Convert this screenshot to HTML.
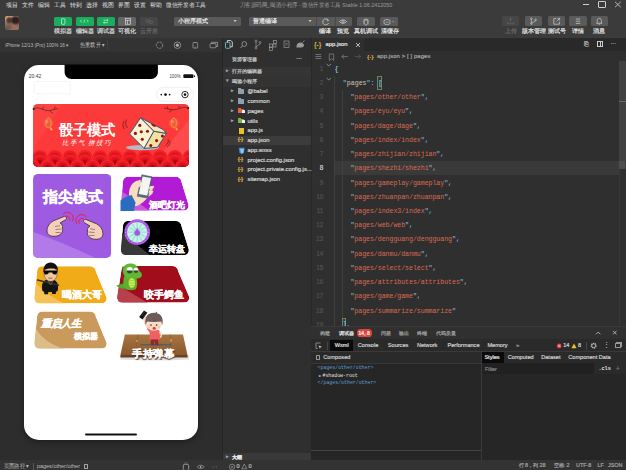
<!DOCTYPE html>
<html><head><meta charset="utf-8">
<style>
*{box-sizing:border-box;margin:0;padding:0}
html,body{width:626px;height:470px;overflow:hidden;background:#2e2e2e;font-family:"Liberation Sans",sans-serif;color:#ccc}
.a{position:absolute}
.t{position:absolute;white-space:nowrap;line-height:1;-webkit-text-stroke:0.18px currentColor}
.m{font-family:"Liberation Mono",monospace;-webkit-text-stroke:0}
</style></head><body>
<div class="a" style="left:0px;top:0px;width:626px;height:38px;background:#3b3b3b"></div>
<svg class="a" style="left:0;top:0;overflow:visible" width="1" height="1"><text x="5.9" y="6.9" font-size="5.9" fill="#e2e2e2" textLength="11.700000000000001" lengthAdjust="spacingAndGlyphs" font-family="Liberation Sans" >项目</text></svg>
<svg class="a" style="left:0;top:0;overflow:visible" width="1" height="1"><text x="21.9" y="6.9" font-size="5.9" fill="#e2e2e2" textLength="11.699999999999996" lengthAdjust="spacingAndGlyphs" font-family="Liberation Sans" >文件</text></svg>
<svg class="a" style="left:0;top:0;overflow:visible" width="1" height="1"><text x="37.9" y="6.9" font-size="5.9" fill="#e2e2e2" textLength="11.699999999999996" lengthAdjust="spacingAndGlyphs" font-family="Liberation Sans" >编辑</text></svg>
<svg class="a" style="left:0;top:0;overflow:visible" width="1" height="1"><text x="53.9" y="6.9" font-size="5.9" fill="#e2e2e2" textLength="11.699999999999996" lengthAdjust="spacingAndGlyphs" font-family="Liberation Sans" >工具</text></svg>
<svg class="a" style="left:0;top:0;overflow:visible" width="1" height="1"><text x="69.9" y="6.9" font-size="5.9" fill="#e2e2e2" textLength="11.700000000000003" lengthAdjust="spacingAndGlyphs" font-family="Liberation Sans" >转到</text></svg>
<svg class="a" style="left:0;top:0;overflow:visible" width="1" height="1"><text x="85.9" y="6.9" font-size="5.9" fill="#e2e2e2" textLength="11.700000000000003" lengthAdjust="spacingAndGlyphs" font-family="Liberation Sans" >选择</text></svg>
<svg class="a" style="left:0;top:0;overflow:visible" width="1" height="1"><text x="101.9" y="6.9" font-size="5.9" fill="#e2e2e2" textLength="11.700000000000003" lengthAdjust="spacingAndGlyphs" font-family="Liberation Sans" >视图</text></svg>
<svg class="a" style="left:0;top:0;overflow:visible" width="1" height="1"><text x="117.9" y="6.9" font-size="5.9" fill="#e2e2e2" textLength="11.699999999999989" lengthAdjust="spacingAndGlyphs" font-family="Liberation Sans" >界面</text></svg>
<svg class="a" style="left:0;top:0;overflow:visible" width="1" height="1"><text x="133.9" y="6.9" font-size="5.9" fill="#e2e2e2" textLength="11.699999999999989" lengthAdjust="spacingAndGlyphs" font-family="Liberation Sans" >设置</text></svg>
<svg class="a" style="left:0;top:0;overflow:visible" width="1" height="1"><text x="149.9" y="6.9" font-size="5.9" fill="#e2e2e2" textLength="11.699999999999989" lengthAdjust="spacingAndGlyphs" font-family="Liberation Sans" >帮助</text></svg>
<svg class="a" style="left:0;top:0;overflow:visible" width="1" height="1"><text x="165.9" y="6.9" font-size="5.9" fill="#e2e2e2" textLength="40.099999999999994" lengthAdjust="spacingAndGlyphs" font-family="Liberation Sans" >微信开发者工具</text></svg>
<svg class="a" style="left:0;top:0;overflow:visible" width="1" height="1"><text x="239.5" y="6.9" font-size="5.9" fill="#9c9c9c" textLength="152.7" lengthAdjust="spacingAndGlyphs" font-family="Liberation Sans" >刀客源码网_喝酒小程序 - 微信开发者工具 Stable 1.06.2412050</text></svg>
<div class="a" style="left:5.4px;top:15.7px;width:13.8px;height:14.3px;border-radius:2px;background:radial-gradient(ellipse at 75% 30%,#2e201c 0 18%,transparent 38%),radial-gradient(ellipse at 30% 30%,#4a3a30 0 12%,transparent 30%),radial-gradient(ellipse at 70% 75%,#9a6a5a 0 15%,transparent 40%),radial-gradient(ellipse at 15% 15%,#e0a070 0 10%,transparent 25%),linear-gradient(160deg,#c8b49a 0%,#8a7462 40%,#6a5648 70%,#a08a76 100%)"></div>
<div class="a" style="left:54px;top:16.5px;width:18px;height:9.3px;background:#1aad5e;border-radius:1.5px"></div>
<div class="a" style="left:75.7px;top:16.5px;width:18px;height:9.3px;background:#1aad5e;border-radius:1.5px"></div>
<div class="a" style="left:97.2px;top:16.5px;width:18px;height:9.3px;background:#1aad5e;border-radius:1.5px"></div>
<div class="a" style="left:118.3px;top:16.5px;width:18px;height:9.3px;background:#666;border-radius:1.5px"></div>
<div class="a" style="left:140.3px;top:16.5px;width:18px;height:9.3px;background:#464646;border-radius:1.5px"></div>
<svg class="a" style="left:54px;top:16px" width="106" height="10" viewBox="54 16 106 10"><rect x="61.5" y="18.8" width="3.4" height="5.5" rx="0.6" fill="none" stroke="#fff" stroke-width="0.6"/><path d="M81.6 19.8l-1.2 1.3 1.2 1.3M87 19.8l1.2 1.3-1.2 1.3M84.9 19.5l-1.1 3.2" fill="none" stroke="#fff" stroke-width="0.55"/><path d="M103.5 20.2h4.5M107 19.3l1 0.9-1 0.9M108 22.6h-4.5M104.5 21.7l-1 0.9 1 0.9" fill="none" stroke="#fff" stroke-width="0.55"/><rect x="125.3" y="18.6" width="5.2" height="5.6" fill="none" stroke="#e6e6e6" stroke-width="0.6"/><path d="M125.3 20.4h5.2M127.5 20.4v3.8" stroke="#e6e6e6" stroke-width="0.6"/><ellipse cx="148" cy="21" rx="2" ry="1.3" fill="none" stroke="#6c6c6c" stroke-width="0.6"/><ellipse cx="150.8" cy="22.2" rx="2" ry="1.3" fill="none" stroke="#6c6c6c" stroke-width="0.6"/></svg>
<div class="t" style="left:23px;top:28.6px;width:80px;text-align:center;font-size:5.9px;color:#dcdcdc;">模拟器</div>
<div class="t" style="left:44.7px;top:28.6px;width:80px;text-align:center;font-size:5.9px;color:#dcdcdc;">编辑器</div>
<div class="t" style="left:66.1px;top:28.6px;width:80px;text-align:center;font-size:5.9px;color:#dcdcdc;">调试器</div>
<div class="t" style="left:87.2px;top:28.6px;width:80px;text-align:center;font-size:5.9px;color:#dcdcdc;">可视化</div>
<div class="t" style="left:109.19999999999999px;top:28.6px;width:80px;text-align:center;font-size:5.9px;color:#6e6e6e;">云开发</div>
<div class="a" style="left:173.6px;top:16.6px;width:67.5px;height:9.6px;background:#5a5a5a;border-radius:1.5px"></div>
<div class="t" style="left:178px;top:18.6px;font-size:5.6px;color:#e8e8e8;">小程序模式</div>
<div class="t" style="left:233.5px;top:19.0px;font-size:4.2px;color:#ddd;">▾</div>
<div class="a" style="left:248.8px;top:16.6px;width:103px;height:9.6px;background:#5a5a5a;border-radius:1.5px"></div>
<div class="a" style="left:316.3px;top:16.6px;width:0.6px;height:9.6px;background:#4a4a4a"></div>
<div class="a" style="left:334.5px;top:16.6px;width:0.6px;height:9.6px;background:#4a4a4a"></div>
<div class="t" style="left:253px;top:18.6px;font-size:5.6px;color:#e8e8e8;">普通编译</div>
<div class="t" style="left:308.5px;top:19.0px;font-size:4.2px;color:#ddd;">▾</div>
<svg class="a" style="left:320px;top:17px" width="30" height="9"><path d="M8.3 3.2A3 3 0 1 0 8.6 6" fill="none" stroke="#ddd" stroke-width="0.7"/><path d="M7 1.8l1.6 1.6-1.9 0.6" fill="none" stroke="#ddd" stroke-width="0.6"/><path d="M19.5 4.6c1.5-2.2 5.5-2.2 7 0-1.5 2.2-5.5 2.2-7 0z" fill="none" stroke="#ddd" stroke-width="0.7"/><circle cx="23" cy="4.6" r="1" fill="none" stroke="#ddd" stroke-width="0.6"/></svg>
<div class="t" style="left:285.4px;top:28.6px;width:80px;text-align:center;font-size:5.9px;color:#e8e8e8;">编译</div>
<div class="t" style="left:303.4px;top:28.6px;width:80px;text-align:center;font-size:5.9px;color:#e8e8e8;">预览</div>
<div class="a" style="left:357.1px;top:16.6px;width:17.8px;height:9.6px;background:#5a5a5a;border-radius:1.5px"></div>
<div class="a" style="left:380.1px;top:16.6px;width:17.8px;height:9.6px;background:#5a5a5a;border-radius:1.5px"></div>
<svg class="a" style="left:357px;top:16.6px" width="42" height="10" viewBox="357 16.6 42 10"><path d="M364.2 19.6h3.6v3c0 1.2-0.8 2-1.8 2s-1.8-0.8-1.8-2z" fill="none" stroke="#e0e0e0" stroke-width="0.6"/><path d="M364.9 19.6c0-0.8 0.5-1.3 1.1-1.3s1.1 0.5 1.1 1.3M364.2 21h-1.2M367.8 21h1.2M364.2 23l-1 0.7M367.8 23l1 0.7M364.4 19.4l-0.9-0.9M367.6 19.4l0.9-0.9" fill="none" stroke="#e0e0e0" stroke-width="0.5"/><rect x="384" y="19.2" width="6" height="4.8" rx="1.6" fill="none" stroke="#e0e0e0" stroke-width="0.6"/><path d="M385.5 21.8h3" stroke="#e0e0e0" stroke-width="0.5"/><path d="M392.2 21l0.9 0.9 0.9-0.9z" fill="#e0e0e0"/></svg>
<div class="t" style="left:326px;top:28.6px;width:80px;text-align:center;font-size:5.9px;color:#e8e8e8;">真机调试</div>
<div class="t" style="left:349.5px;top:28.6px;width:80px;text-align:center;font-size:5.9px;color:#e8e8e8;">清缓存</div>
<div class="a" style="left:501.6px;top:16.2px;width:17.8px;height:10px;background:#464646;border-radius:1.5px"></div>
<div class="a" style="left:524.6px;top:16.2px;width:17.8px;height:10px;background:#5a5a5a;border-radius:1.5px"></div>
<div class="a" style="left:547.7px;top:16.2px;width:17.8px;height:10px;background:#5a5a5a;border-radius:1.5px"></div>
<div class="a" style="left:569px;top:16.2px;width:17.8px;height:10px;background:#5a5a5a;border-radius:1.5px"></div>
<div class="a" style="left:590.6px;top:16.2px;width:17.8px;height:10px;background:#5a5a5a;border-radius:1.5px"></div>
<svg class="a" style="left:500px;top:16px" width="110" height="10" viewBox="500 16 110 10"><path d="M507.5 22v1.8h6V22M510.5 22.4v-4.2M508.9 19.8l1.6-1.6 1.6 1.6" fill="none" stroke="#6c6c6c" stroke-width="0.6"/><circle cx="531.4" cy="18.8" r="0.8" fill="none" stroke="#e6e6e6" stroke-width="0.55"/><circle cx="531.4" cy="23.6" r="0.8" fill="none" stroke="#e6e6e6" stroke-width="0.55"/><circle cx="535.6" cy="19.8" r="0.8" fill="none" stroke="#e6e6e6" stroke-width="0.55"/><path d="M531.4 19.6v3.2M535.6 20.6c0 1.5-3 1.2-4 2.3" fill="none" stroke="#e6e6e6" stroke-width="0.55"/><path d="M556.4 18.6h-2.6v5.6h5.6v-2.6M556.6 21.4l3-3M557.6 18.4h2v2" fill="none" stroke="#e6e6e6" stroke-width="0.6"/><path d="M575.8 19h4.4M575.8 21.2h4.4M575.8 23.4h4.4" stroke="#e6e6e6" stroke-width="0.6"/><path d="M597.2 23.2V20.6c0-1.4 0.9-2.3 2.1-2.3s2.1 0.9 2.1 2.3v2.6M596.4 23.3h5.8M598.6 24.2h1.4" fill="none" stroke="#e6e6e6" stroke-width="0.6"/></svg>
<div class="t" style="left:470.5px;top:28.6px;width:80px;text-align:center;font-size:5.9px;color:#6e6e6e;">上传</div>
<div class="t" style="left:493.6px;top:28.6px;width:80px;text-align:center;font-size:5.9px;color:#e8e8e8;">版本管理</div>
<div class="t" style="left:516.6px;top:28.6px;width:80px;text-align:center;font-size:5.9px;color:#e8e8e8;">测试号</div>
<div class="t" style="left:538px;top:28.6px;width:80px;text-align:center;font-size:5.9px;color:#e8e8e8;">详情</div>
<div class="t" style="left:559.3px;top:28.6px;width:80px;text-align:center;font-size:5.9px;color:#e8e8e8;">消息</div>
<div class="a" style="left:583px;top:3.6px;width:5.6px;height:0.8px;background:#cfcfcf"></div>
<div class="a" style="left:598.2px;top:1px;width:7.5px;height:6.6px;border:0.8px solid #cfcfcf;border-radius:1px"></div>
<svg class="a" style="left:614px;top:1px" width="8" height="7"><path d="M1 0.8L6.8 6.2M6.8 0.8L1 6.2" stroke="#cfcfcf" stroke-width="0.8"/></svg>
<div class="a" style="left:0px;top:38px;width:222px;height:14px;background:#333"></div>
<div class="a" style="left:0px;top:52px;width:222px;height:408px;background:#2d2d2d"></div>
<div class="a" style="left:222px;top:38px;width:1px;height:422px;background:#252525"></div>
<div class="a" style="left:223px;top:38px;width:88px;height:422px;background:#2f2f2f"></div>
<div class="a" style="left:311px;top:38px;width:1px;height:422px;background:#282828"></div>
<div class="a" style="left:312px;top:38px;width:314px;height:13px;background:#292929"></div>
<div class="a" style="left:312px;top:38px;width:52px;height:13px;background:#2f2f2f"></div>
<div class="a" style="left:312px;top:51px;width:314px;height:275px;background:#2f2f2f"></div>
<div class="a" style="left:311px;top:326px;width:315px;height:134px;background:#262626"></div>
<div class="a" style="left:0px;top:460px;width:626px;height:10px;background:#333"></div>
<div class="a" style="left:24px;top:64.5px;width:174px;height:375px;background:#fff;border-radius:15px;box-shadow:0 2px 6px rgba(0,0,0,.35)"></div>
<svg class="a" style="left:0;top:0" width="626" height="470" viewBox="0 0 626 470"><path d="M64.6 64.5H157.9V72C157.9 75.9 154.8 79 150.9 79H71.6C67.7 79 64.6 75.9 64.6 72Z" fill="#000"/><text x="28.8" y="78" font-size="5.6" fill="#333" textLength="12.4" lengthAdjust="spacingAndGlyphs" font-family="Liberation Sans">20:42</text><rect x="34.4" y="81.4" width="36" height="12.5" rx="2" fill="none" stroke="#ececec" stroke-width="0.6"/><text x="169.4" y="78" font-size="5.2" fill="#444" textLength="11.2" lengthAdjust="spacingAndGlyphs" font-family="Liberation Sans">100%</text><rect x="183.4" y="74.3" width="10" height="3.8" rx="0.9" fill="#111"/><rect x="194" y="75.4" width="1" height="1.6" fill="#111"/><rect x="156.6" y="87.4" width="37" height="14" rx="7" fill="#fff" stroke="#e6e6e6" stroke-width="0.6"/><circle cx="161.3" cy="94.6" r="0.85" fill="#111"/><circle cx="165.5" cy="94.6" r="1.35" fill="#111"/><circle cx="169.6" cy="94.6" r="0.85" fill="#111"/><circle cx="185" cy="94.6" r="3.2" fill="none" stroke="#111" stroke-width="0.9"/><circle cx="185" cy="94.6" r="1.3" fill="#111"/><clipPath id="cb"><rect x="33.1" y="103.9" width="155.9" height="63.1" rx="5"/></clipPath><g clip-path="url(#cb)"><rect x="33" y="103.9" width="156" height="63.2" fill="#fc3a3a"/><path d="M33 103.9H62L33 150Z" fill="#ff4848" opacity=".6"/><path d="M189 120L150 167H189Z" fill="#ff5a5a" opacity=".55"/><radialGradient id="wg"><stop offset="0" stop-color="#a8000e"/><stop offset="0.55" stop-color="#d80c1a"/><stop offset="1" stop-color="#f41c24"/></radialGradient><circle cx="10.0" cy="157.5" r="7.6" fill="url(#wg)"/><circle cx="10.0" cy="157.5" r="6.6" fill="none" stroke="#ff3c3c" stroke-width="0.55"/><circle cx="10.0" cy="157.5" r="4.9" fill="none" stroke="#f83030" stroke-width="0.55"/><circle cx="10.0" cy="157.5" r="3.2" fill="none" stroke="#e82828" stroke-width="0.5"/><circle cx="25.0" cy="157.5" r="7.6" fill="url(#wg)"/><circle cx="25.0" cy="157.5" r="6.6" fill="none" stroke="#ff3c3c" stroke-width="0.55"/><circle cx="25.0" cy="157.5" r="4.9" fill="none" stroke="#f83030" stroke-width="0.55"/><circle cx="25.0" cy="157.5" r="3.2" fill="none" stroke="#e82828" stroke-width="0.5"/><circle cx="40.0" cy="157.5" r="7.6" fill="url(#wg)"/><circle cx="40.0" cy="157.5" r="6.6" fill="none" stroke="#ff3c3c" stroke-width="0.55"/><circle cx="40.0" cy="157.5" r="4.9" fill="none" stroke="#f83030" stroke-width="0.55"/><circle cx="40.0" cy="157.5" r="3.2" fill="none" stroke="#e82828" stroke-width="0.5"/><circle cx="55.0" cy="157.5" r="7.6" fill="url(#wg)"/><circle cx="55.0" cy="157.5" r="6.6" fill="none" stroke="#ff3c3c" stroke-width="0.55"/><circle cx="55.0" cy="157.5" r="4.9" fill="none" stroke="#f83030" stroke-width="0.55"/><circle cx="55.0" cy="157.5" r="3.2" fill="none" stroke="#e82828" stroke-width="0.5"/><circle cx="70.0" cy="157.5" r="7.6" fill="url(#wg)"/><circle cx="70.0" cy="157.5" r="6.6" fill="none" stroke="#ff3c3c" stroke-width="0.55"/><circle cx="70.0" cy="157.5" r="4.9" fill="none" stroke="#f83030" stroke-width="0.55"/><circle cx="70.0" cy="157.5" r="3.2" fill="none" stroke="#e82828" stroke-width="0.5"/><circle cx="85.0" cy="157.5" r="7.6" fill="url(#wg)"/><circle cx="85.0" cy="157.5" r="6.6" fill="none" stroke="#ff3c3c" stroke-width="0.55"/><circle cx="85.0" cy="157.5" r="4.9" fill="none" stroke="#f83030" stroke-width="0.55"/><circle cx="85.0" cy="157.5" r="3.2" fill="none" stroke="#e82828" stroke-width="0.5"/><circle cx="100.0" cy="157.5" r="7.6" fill="url(#wg)"/><circle cx="100.0" cy="157.5" r="6.6" fill="none" stroke="#ff3c3c" stroke-width="0.55"/><circle cx="100.0" cy="157.5" r="4.9" fill="none" stroke="#f83030" stroke-width="0.55"/><circle cx="100.0" cy="157.5" r="3.2" fill="none" stroke="#e82828" stroke-width="0.5"/><circle cx="115.0" cy="157.5" r="7.6" fill="url(#wg)"/><circle cx="115.0" cy="157.5" r="6.6" fill="none" stroke="#ff3c3c" stroke-width="0.55"/><circle cx="115.0" cy="157.5" r="4.9" fill="none" stroke="#f83030" stroke-width="0.55"/><circle cx="115.0" cy="157.5" r="3.2" fill="none" stroke="#e82828" stroke-width="0.5"/><circle cx="130.0" cy="157.5" r="7.6" fill="url(#wg)"/><circle cx="130.0" cy="157.5" r="6.6" fill="none" stroke="#ff3c3c" stroke-width="0.55"/><circle cx="130.0" cy="157.5" r="4.9" fill="none" stroke="#f83030" stroke-width="0.55"/><circle cx="130.0" cy="157.5" r="3.2" fill="none" stroke="#e82828" stroke-width="0.5"/><circle cx="145.0" cy="157.5" r="7.6" fill="url(#wg)"/><circle cx="145.0" cy="157.5" r="6.6" fill="none" stroke="#ff3c3c" stroke-width="0.55"/><circle cx="145.0" cy="157.5" r="4.9" fill="none" stroke="#f83030" stroke-width="0.55"/><circle cx="145.0" cy="157.5" r="3.2" fill="none" stroke="#e82828" stroke-width="0.5"/><circle cx="160.0" cy="157.5" r="7.6" fill="url(#wg)"/><circle cx="160.0" cy="157.5" r="6.6" fill="none" stroke="#ff3c3c" stroke-width="0.55"/><circle cx="160.0" cy="157.5" r="4.9" fill="none" stroke="#f83030" stroke-width="0.55"/><circle cx="160.0" cy="157.5" r="3.2" fill="none" stroke="#e82828" stroke-width="0.5"/><circle cx="175.0" cy="157.5" r="7.6" fill="url(#wg)"/><circle cx="175.0" cy="157.5" r="6.6" fill="none" stroke="#ff3c3c" stroke-width="0.55"/><circle cx="175.0" cy="157.5" r="4.9" fill="none" stroke="#f83030" stroke-width="0.55"/><circle cx="175.0" cy="157.5" r="3.2" fill="none" stroke="#e82828" stroke-width="0.5"/><circle cx="190.0" cy="157.5" r="7.6" fill="url(#wg)"/><circle cx="190.0" cy="157.5" r="6.6" fill="none" stroke="#ff3c3c" stroke-width="0.55"/><circle cx="190.0" cy="157.5" r="4.9" fill="none" stroke="#f83030" stroke-width="0.55"/><circle cx="190.0" cy="157.5" r="3.2" fill="none" stroke="#e82828" stroke-width="0.5"/><circle cx="25.0" cy="162.2" r="7.6" fill="url(#wg)"/><circle cx="25.0" cy="162.2" r="6.6" fill="none" stroke="#ff3c3c" stroke-width="0.55"/><circle cx="25.0" cy="162.2" r="4.9" fill="none" stroke="#f83030" stroke-width="0.55"/><circle cx="25.0" cy="162.2" r="3.2" fill="none" stroke="#e82828" stroke-width="0.5"/><circle cx="40.0" cy="162.2" r="7.6" fill="url(#wg)"/><circle cx="40.0" cy="162.2" r="6.6" fill="none" stroke="#ff3c3c" stroke-width="0.55"/><circle cx="40.0" cy="162.2" r="4.9" fill="none" stroke="#f83030" stroke-width="0.55"/><circle cx="40.0" cy="162.2" r="3.2" fill="none" stroke="#e82828" stroke-width="0.5"/><circle cx="55.0" cy="162.2" r="7.6" fill="url(#wg)"/><circle cx="55.0" cy="162.2" r="6.6" fill="none" stroke="#ff3c3c" stroke-width="0.55"/><circle cx="55.0" cy="162.2" r="4.9" fill="none" stroke="#f83030" stroke-width="0.55"/><circle cx="55.0" cy="162.2" r="3.2" fill="none" stroke="#e82828" stroke-width="0.5"/><circle cx="70.0" cy="162.2" r="7.6" fill="url(#wg)"/><circle cx="70.0" cy="162.2" r="6.6" fill="none" stroke="#ff3c3c" stroke-width="0.55"/><circle cx="70.0" cy="162.2" r="4.9" fill="none" stroke="#f83030" stroke-width="0.55"/><circle cx="70.0" cy="162.2" r="3.2" fill="none" stroke="#e82828" stroke-width="0.5"/><circle cx="85.0" cy="162.2" r="7.6" fill="url(#wg)"/><circle cx="85.0" cy="162.2" r="6.6" fill="none" stroke="#ff3c3c" stroke-width="0.55"/><circle cx="85.0" cy="162.2" r="4.9" fill="none" stroke="#f83030" stroke-width="0.55"/><circle cx="85.0" cy="162.2" r="3.2" fill="none" stroke="#e82828" stroke-width="0.5"/><circle cx="100.0" cy="162.2" r="7.6" fill="url(#wg)"/><circle cx="100.0" cy="162.2" r="6.6" fill="none" stroke="#ff3c3c" stroke-width="0.55"/><circle cx="100.0" cy="162.2" r="4.9" fill="none" stroke="#f83030" stroke-width="0.55"/><circle cx="100.0" cy="162.2" r="3.2" fill="none" stroke="#e82828" stroke-width="0.5"/><circle cx="115.0" cy="162.2" r="7.6" fill="url(#wg)"/><circle cx="115.0" cy="162.2" r="6.6" fill="none" stroke="#ff3c3c" stroke-width="0.55"/><circle cx="115.0" cy="162.2" r="4.9" fill="none" stroke="#f83030" stroke-width="0.55"/><circle cx="115.0" cy="162.2" r="3.2" fill="none" stroke="#e82828" stroke-width="0.5"/><circle cx="130.0" cy="162.2" r="7.6" fill="url(#wg)"/><circle cx="130.0" cy="162.2" r="6.6" fill="none" stroke="#ff3c3c" stroke-width="0.55"/><circle cx="130.0" cy="162.2" r="4.9" fill="none" stroke="#f83030" stroke-width="0.55"/><circle cx="130.0" cy="162.2" r="3.2" fill="none" stroke="#e82828" stroke-width="0.5"/><circle cx="145.0" cy="162.2" r="7.6" fill="url(#wg)"/><circle cx="145.0" cy="162.2" r="6.6" fill="none" stroke="#ff3c3c" stroke-width="0.55"/><circle cx="145.0" cy="162.2" r="4.9" fill="none" stroke="#f83030" stroke-width="0.55"/><circle cx="145.0" cy="162.2" r="3.2" fill="none" stroke="#e82828" stroke-width="0.5"/><circle cx="160.0" cy="162.2" r="7.6" fill="url(#wg)"/><circle cx="160.0" cy="162.2" r="6.6" fill="none" stroke="#ff3c3c" stroke-width="0.55"/><circle cx="160.0" cy="162.2" r="4.9" fill="none" stroke="#f83030" stroke-width="0.55"/><circle cx="160.0" cy="162.2" r="3.2" fill="none" stroke="#e82828" stroke-width="0.5"/><circle cx="175.0" cy="162.2" r="7.6" fill="url(#wg)"/><circle cx="175.0" cy="162.2" r="6.6" fill="none" stroke="#ff3c3c" stroke-width="0.55"/><circle cx="175.0" cy="162.2" r="4.9" fill="none" stroke="#f83030" stroke-width="0.55"/><circle cx="175.0" cy="162.2" r="3.2" fill="none" stroke="#e82828" stroke-width="0.5"/><circle cx="190.0" cy="162.2" r="7.6" fill="url(#wg)"/><circle cx="190.0" cy="162.2" r="6.6" fill="none" stroke="#ff3c3c" stroke-width="0.55"/><circle cx="190.0" cy="162.2" r="4.9" fill="none" stroke="#f83030" stroke-width="0.55"/><circle cx="190.0" cy="162.2" r="3.2" fill="none" stroke="#e82828" stroke-width="0.5"/><circle cx="17.5" cy="167.2" r="7.6" fill="url(#wg)"/><circle cx="17.5" cy="167.2" r="6.6" fill="none" stroke="#ff3c3c" stroke-width="0.55"/><circle cx="17.5" cy="167.2" r="4.9" fill="none" stroke="#f83030" stroke-width="0.55"/><circle cx="17.5" cy="167.2" r="3.2" fill="none" stroke="#e82828" stroke-width="0.5"/><circle cx="32.5" cy="167.2" r="7.6" fill="url(#wg)"/><circle cx="32.5" cy="167.2" r="6.6" fill="none" stroke="#ff3c3c" stroke-width="0.55"/><circle cx="32.5" cy="167.2" r="4.9" fill="none" stroke="#f83030" stroke-width="0.55"/><circle cx="32.5" cy="167.2" r="3.2" fill="none" stroke="#e82828" stroke-width="0.5"/><circle cx="47.5" cy="167.2" r="7.6" fill="url(#wg)"/><circle cx="47.5" cy="167.2" r="6.6" fill="none" stroke="#ff3c3c" stroke-width="0.55"/><circle cx="47.5" cy="167.2" r="4.9" fill="none" stroke="#f83030" stroke-width="0.55"/><circle cx="47.5" cy="167.2" r="3.2" fill="none" stroke="#e82828" stroke-width="0.5"/><circle cx="62.5" cy="167.2" r="7.6" fill="url(#wg)"/><circle cx="62.5" cy="167.2" r="6.6" fill="none" stroke="#ff3c3c" stroke-width="0.55"/><circle cx="62.5" cy="167.2" r="4.9" fill="none" stroke="#f83030" stroke-width="0.55"/><circle cx="62.5" cy="167.2" r="3.2" fill="none" stroke="#e82828" stroke-width="0.5"/><circle cx="77.5" cy="167.2" r="7.6" fill="url(#wg)"/><circle cx="77.5" cy="167.2" r="6.6" fill="none" stroke="#ff3c3c" stroke-width="0.55"/><circle cx="77.5" cy="167.2" r="4.9" fill="none" stroke="#f83030" stroke-width="0.55"/><circle cx="77.5" cy="167.2" r="3.2" fill="none" stroke="#e82828" stroke-width="0.5"/><circle cx="92.5" cy="167.2" r="7.6" fill="url(#wg)"/><circle cx="92.5" cy="167.2" r="6.6" fill="none" stroke="#ff3c3c" stroke-width="0.55"/><circle cx="92.5" cy="167.2" r="4.9" fill="none" stroke="#f83030" stroke-width="0.55"/><circle cx="92.5" cy="167.2" r="3.2" fill="none" stroke="#e82828" stroke-width="0.5"/><circle cx="107.5" cy="167.2" r="7.6" fill="url(#wg)"/><circle cx="107.5" cy="167.2" r="6.6" fill="none" stroke="#ff3c3c" stroke-width="0.55"/><circle cx="107.5" cy="167.2" r="4.9" fill="none" stroke="#f83030" stroke-width="0.55"/><circle cx="107.5" cy="167.2" r="3.2" fill="none" stroke="#e82828" stroke-width="0.5"/><circle cx="122.5" cy="167.2" r="7.6" fill="url(#wg)"/><circle cx="122.5" cy="167.2" r="6.6" fill="none" stroke="#ff3c3c" stroke-width="0.55"/><circle cx="122.5" cy="167.2" r="4.9" fill="none" stroke="#f83030" stroke-width="0.55"/><circle cx="122.5" cy="167.2" r="3.2" fill="none" stroke="#e82828" stroke-width="0.5"/><circle cx="137.5" cy="167.2" r="7.6" fill="url(#wg)"/><circle cx="137.5" cy="167.2" r="6.6" fill="none" stroke="#ff3c3c" stroke-width="0.55"/><circle cx="137.5" cy="167.2" r="4.9" fill="none" stroke="#f83030" stroke-width="0.55"/><circle cx="137.5" cy="167.2" r="3.2" fill="none" stroke="#e82828" stroke-width="0.5"/><circle cx="152.5" cy="167.2" r="7.6" fill="url(#wg)"/><circle cx="152.5" cy="167.2" r="6.6" fill="none" stroke="#ff3c3c" stroke-width="0.55"/><circle cx="152.5" cy="167.2" r="4.9" fill="none" stroke="#f83030" stroke-width="0.55"/><circle cx="152.5" cy="167.2" r="3.2" fill="none" stroke="#e82828" stroke-width="0.5"/><circle cx="167.5" cy="167.2" r="7.6" fill="url(#wg)"/><circle cx="167.5" cy="167.2" r="6.6" fill="none" stroke="#ff3c3c" stroke-width="0.55"/><circle cx="167.5" cy="167.2" r="4.9" fill="none" stroke="#f83030" stroke-width="0.55"/><circle cx="167.5" cy="167.2" r="3.2" fill="none" stroke="#e82828" stroke-width="0.5"/><circle cx="182.5" cy="167.2" r="7.6" fill="url(#wg)"/><circle cx="182.5" cy="167.2" r="6.6" fill="none" stroke="#ff3c3c" stroke-width="0.55"/><circle cx="182.5" cy="167.2" r="4.9" fill="none" stroke="#f83030" stroke-width="0.55"/><circle cx="182.5" cy="167.2" r="3.2" fill="none" stroke="#e82828" stroke-width="0.5"/><circle cx="197.5" cy="167.2" r="7.6" fill="url(#wg)"/><circle cx="197.5" cy="167.2" r="6.6" fill="none" stroke="#ff3c3c" stroke-width="0.55"/><circle cx="197.5" cy="167.2" r="4.9" fill="none" stroke="#f83030" stroke-width="0.55"/><circle cx="197.5" cy="167.2" r="3.2" fill="none" stroke="#e82828" stroke-width="0.5"/></g><path d="M33.5 109C38 106.5 42 109 46 110.5C50 111.5 54 109 58 108.5M42 109.5l2-3M50 111l3 2.5M54 109.5l1.5-3" fill="none" stroke="#4a2a20" stroke-width="0.7"/><path d="M188 108C184 106 180 108.5 176 109.5C172 110.5 168 108.5 164 108M180 108.3l-2-2.6M172 110l-3 2.3M168 109l-1-2.8" fill="none" stroke="#4a2a20" stroke-width="0.7"/><circle cx="188.2" cy="108" r="1" fill="#222"/><circle cx="33.6" cy="109" r="1" fill="#222"/><path d="M47.6 117.5h1.6v1h-1.6z" fill="#c89030"/><circle cx="48.4" cy="123.1" r="4.8" fill="#ee6038"/><ellipse cx="48.4" cy="123.1" rx="2.6" ry="4.8" fill="none" stroke="#f8b070" stroke-width="0.5"/><circle cx="46.9" cy="121.6" r="1.6" fill="#f8a080" opacity=".6"/><path d="M50.199999999999996 127.3l1.6 0.6 0.8 2.6-2.2-0.6z" fill="#f2b43c"/><path d="M173.0 117.5h1.6v1h-1.6z" fill="#c89030"/><circle cx="173.8" cy="123.1" r="4.8" fill="#ee6038"/><ellipse cx="173.8" cy="123.1" rx="2.6" ry="4.8" fill="none" stroke="#f8b070" stroke-width="0.5"/><circle cx="172.3" cy="121.6" r="1.6" fill="#f8a080" opacity=".6"/><path d="M175.60000000000002 127.3l1.6 0.6 0.8 2.6-2.2-0.6z" fill="#f2b43c"/><text x="58.6" y="134.6" font-size="14.6" font-weight="bold" fill="#fff" textLength="57" lengthAdjust="spacingAndGlyphs" font-family="Liberation Sans">骰子模式</text><text x="62" y="145.2" font-size="6.6" fill="#fff" font-family="Liberation Sans" letter-spacing="0.9" font-style="italic">比手气 拼技巧</text><ellipse cx="142.5" cy="147.6" rx="16.5" ry="2.6" fill="#b7b9c4"/><path d="M124 121c-1.5 2.5-1.5 5.5 0.5 8M126.5 119.5c-1.5 3-1 6 1 8.5" fill="none" stroke="#5a1a1a" stroke-width="0.7"/><path d="M168 139c1 2.5-0.5 5-2.5 6.5M170 141c0.5 2.5-1 5-3 6" fill="none" stroke="#5a1a1a" stroke-width="0.7"/><path d="M140.6 117.8L129.6 133.9L144.1 148.4L153.9 131.2Z" fill="#fbf2d0" stroke="#3a4a80" stroke-width="0.95" stroke-linejoin="round"/><path d="M153.9 131.2L166.5 133.4L157.5 147.3L144.1 148.4Z" fill="#f3e19c" stroke="#3a4a80" stroke-width="0.95" stroke-linejoin="round"/><path d="M140.6 117.8L162.9 129.4L166.5 133.4L153.9 131.2Z" fill="#f7e8b4" stroke="#3a4a80" stroke-width="0.95" stroke-linejoin="round"/><circle cx="139.8" cy="125.4" r="1.55" fill="#9a1010"/><circle cx="135.4" cy="133.4" r="1.55" fill="#9a1010"/><circle cx="141.3" cy="131.8" r="1.55" fill="#9a1010"/><circle cx="147.5" cy="131.2" r="1.55" fill="#9a1010"/><circle cx="142.3" cy="139.3" r="1.55" fill="#9a1010"/><circle cx="162.4" cy="136.1" r="1.55" fill="#9a1010"/><circle cx="156.6" cy="140.6" r="1.55" fill="#9a1010"/><circle cx="150.8" cy="145.5" r="1.55" fill="#9a1010"/><ellipse cx="153.5" cy="125.4" rx="2.6" ry="1" transform="rotate(30 153.5 125.4)" fill="#9a1010"/><clipPath id="cp"><rect x="33.1" y="173.9" width="78.1" height="84.1" rx="5"/></clipPath><g clip-path="url(#cp)"><rect x="33" y="173.8" width="78.3" height="84.3" fill="#9f5ae2"/><path d="M33 232C50 238 80 250 95 258H33Z" fill="#b27ae8"/></g><text x="42.6" y="202.4" font-size="14.8" font-weight="bold" fill="#fff" stroke="#fff" stroke-width="0.3" font-family="Liberation Sans">指尖模式</text><path d="M47 231C47 226 50 223 53 221L64 216.5C66 215.7 67.5 218.5 65.5 219.8L60 223C62 224 63 226 62.5 228C63 230 62.5 232.5 61 233.5C60 235.5 57 236.5 53 236.3C49.5 236 47 234 47 231Z" fill="#f5cfbb" stroke="#3a3030" stroke-width="0.8" stroke-linejoin="round"/><path d="M55 226.5l5-0.8M55.5 229.5l6-0.5M55.5 232.5l5 0" fill="none" stroke="#3a3030" stroke-width="0.5"/><path d="M103 234C103 229 100 226 97 224L86 219.5C84 218.7 82.5 221.5 84.5 222.8L90 226C88 227 87 229 87.5 231C87 233 87.5 235.5 89 236.5C90 238.5 93 239.5 97 239.3C100.5 239 103 237 103 234Z" fill="#f5cfbb" stroke="#3a3030" stroke-width="0.8" stroke-linejoin="round"/><path d="M95 229.5l-5-0.8M94.5 232.5l-6-0.5M94.5 235.5l-5 0" fill="none" stroke="#3a3030" stroke-width="0.5"/><path d="M63 214.5A5.5 5.5 0 0 1 72 221.5M64.8 216.8A3.2 3.2 0 0 1 69.6 220.8" fill="none" stroke="#e8204a" stroke-width="1"/><path d="M77 224A5.5 5.5 0 0 1 86.5 217M79.4 223.5A3.2 3.2 0 0 1 84.6 219.6" fill="none" stroke="#e8204a" stroke-width="1"/><clipPath id="c1"><path d="M128.4 176.7H175.3Q180.8 176.7 181.60000000000002 182.2L188.6 205.1Q188.9 210.6 183.1 210.6H126.5Q121 210.6 121 205.1L122.9 182.2Q123.10000000000001 176.7 128.4 176.7Z"/></clipPath><g clip-path="url(#c1)"><path d="M128.4 176.7H175.3Q180.8 176.7 181.60000000000002 182.2L188.6 205.1Q188.9 210.6 183.1 210.6H126.5Q121 210.6 121 205.1L122.9 182.2Q123.10000000000001 176.7 128.4 176.7Z" fill="#b11bd6"/><path d="M120 190L150 211H120Z" fill="#c85ae0"/></g><path d="M131 206C129 200 128 193 130 188C131.5 184 134 182 137 180.5L140 182L139 188L150 186C152.5 185.5 154 187 153 189L151 191C153 191.5 153.5 193.5 151.5 194.5L148 197C146 200 142 203.5 137 206Z" fill="#f6dcc0"/><path d="M120.5 200.5C124 197.5 128 195.5 131.5 195L135.5 202.5L134 211H120.5Z" fill="#2a6cc0"/><path d="M141.8 174.8L152.2 176.8L147.8 198.2L137.2 196.2Z" fill="#5a6a7e" stroke="#4a5868" stroke-width="0.5" stroke-linejoin="round"/><path d="M142.6 176.5L151 178.1L147.3 195.5L138.7 193.9Z" fill="#f4f4f4"/><path d="M149.5 186.5L153.2 185.8C154.3 185.8 154.6 187.2 153.6 187.8L149 189.5Z M149 190.5L152.6 190.5C153.6 190.7 153.6 192 152.6 192.3L148.5 193Z" fill="#f6dcc0"/><path d="M137.5 181L140.5 179.5L141.5 186L138.6 187.5Z" fill="#f6dcc0"/><text x="148.8" y="207.7" font-size="9.2" font-weight="bold" fill="#fff" stroke="#fff" stroke-width="0.3" font-family="Liberation Sans">酒吧灯光</text><clipPath id="c2"><path d="M128.4 220.9H175.3Q180.8 220.9 181.60000000000002 226.4L188.8 249.6Q189.10000000000002 255.1 183.3 255.1H126.5Q121 255.1 121 249.6L122.9 226.4Q123.10000000000001 220.9 128.4 220.9Z"/></clipPath><g clip-path="url(#c2)"><path d="M128.4 220.9H175.3Q180.8 220.9 181.60000000000002 226.4L188.8 249.6Q189.10000000000002 255.1 183.3 255.1H126.5Q121 255.1 121 249.6L122.9 226.4Q123.10000000000001 220.9 128.4 220.9Z" fill="#000"/><path d="M120 231L151 256H120Z" fill="#383838"/></g><circle cx="137.2" cy="232.2" r="12.9" fill="#a653e6"/><circle cx="137.2" cy="232.2" r="10.2" fill="#c9f4ea"/><path d="M137.2 232.2L147.40 232.20" stroke="#9fe0d4" stroke-width="1.4"/><path d="M137.2 232.2L146.03 237.30" stroke="#9fe0d4" stroke-width="1.4"/><path d="M137.2 232.2L142.30 241.03" stroke="#9fe0d4" stroke-width="1.4"/><path d="M137.2 232.2L137.20 242.40" stroke="#9fe0d4" stroke-width="1.4"/><path d="M137.2 232.2L132.10 241.03" stroke="#9fe0d4" stroke-width="1.4"/><path d="M137.2 232.2L128.37 237.30" stroke="#9fe0d4" stroke-width="1.4"/><path d="M137.2 232.2L127.00 232.20" stroke="#9fe0d4" stroke-width="1.4"/><path d="M137.2 232.2L128.37 227.10" stroke="#9fe0d4" stroke-width="1.4"/><path d="M137.2 232.2L132.10 223.37" stroke="#9fe0d4" stroke-width="1.4"/><path d="M137.2 232.2L137.20 222.00" stroke="#9fe0d4" stroke-width="1.4"/><path d="M137.2 232.2L142.30 223.37" stroke="#9fe0d4" stroke-width="1.4"/><path d="M137.2 232.2L146.03 227.10" stroke="#9fe0d4" stroke-width="1.4"/><circle cx="148.75" cy="232.20" r="0.45" fill="#f0c0ff"/><circle cx="148.36" cy="235.19" r="0.45" fill="#f0c0ff"/><circle cx="147.20" cy="237.97" r="0.45" fill="#f0c0ff"/><circle cx="145.37" cy="240.37" r="0.45" fill="#f0c0ff"/><circle cx="142.97" cy="242.20" r="0.45" fill="#f0c0ff"/><circle cx="140.19" cy="243.36" r="0.45" fill="#f0c0ff"/><circle cx="137.20" cy="243.75" r="0.45" fill="#f0c0ff"/><circle cx="134.21" cy="243.36" r="0.45" fill="#f0c0ff"/><circle cx="131.42" cy="242.20" r="0.45" fill="#f0c0ff"/><circle cx="129.03" cy="240.37" r="0.45" fill="#f0c0ff"/><circle cx="127.20" cy="237.97" r="0.45" fill="#f0c0ff"/><circle cx="126.04" cy="235.19" r="0.45" fill="#f0c0ff"/><circle cx="125.65" cy="232.20" r="0.45" fill="#f0c0ff"/><circle cx="126.04" cy="229.21" r="0.45" fill="#f0c0ff"/><circle cx="127.20" cy="226.42" r="0.45" fill="#f0c0ff"/><circle cx="129.03" cy="224.03" r="0.45" fill="#f0c0ff"/><circle cx="131.42" cy="222.20" r="0.45" fill="#f0c0ff"/><circle cx="134.21" cy="221.04" r="0.45" fill="#f0c0ff"/><circle cx="137.20" cy="220.65" r="0.45" fill="#f0c0ff"/><circle cx="140.19" cy="221.04" r="0.45" fill="#f0c0ff"/><circle cx="142.97" cy="222.20" r="0.45" fill="#f0c0ff"/><circle cx="145.37" cy="224.03" r="0.45" fill="#f0c0ff"/><circle cx="147.20" cy="226.42" r="0.45" fill="#f0c0ff"/><circle cx="148.36" cy="229.21" r="0.45" fill="#f0c0ff"/><circle cx="137.2" cy="233" r="2.8" fill="#a653e6"/><path d="M135.8 231L137.2 227.5 138.6 231Z" fill="#a653e6"/><text x="148.8" y="251.5" font-size="9.2" font-weight="bold" fill="#fff" stroke="#fff" stroke-width="0.3" font-family="Liberation Sans">幸运转盘</text><clipPath id="c3"><path d="M42.5 266.3H89.7Q95.2 266.3 96.0 271.8L106.7 297.7Q107.0 303.2 101.2 303.2H40.0Q34.5 303.2 34.5 297.7L37 271.8Q37.2 266.3 42.5 266.3Z"/></clipPath><g clip-path="url(#c3)"><path d="M42.5 266.3H89.7Q95.2 266.3 96.0 271.8L106.7 297.7Q107.0 303.2 101.2 303.2H40.0Q34.5 303.2 34.5 297.7L37 271.8Q37.2 266.3 42.5 266.3Z" fill="#f1ab19"/><path d="M34 281C44 292 56 300 66 304H34Z" fill="#f5c258"/></g><path d="M42 286.5c0-4 2.5-6.5 5.5-7h5c3 0.5 5.5 3 5.5 6.5v3.5c0 1.2-0.8 2-2 2.2l-0.3 2.3h-3.5l-0.3-2h-3.6l-0.3 2.2h-3.6l-0.3-2.4c-1.3-0.3-2-1-2-2.3z" fill="#141414"/><path d="M37.5 280l21 5.2" stroke="#333" stroke-width="1.5" stroke-linecap="round"/><path d="M48 281l2.5 4 2.5-4" fill="none" stroke="#c08830" stroke-width="0.5"/><ellipse cx="50.6" cy="273.8" rx="6.6" ry="7.6" fill="#f0c8a0" stroke="#222" stroke-width="0.4"/><path d="M43.6 273c-1-6.5 2.5-10.5 7-10.5s8.2 3.5 7.4 10.5l-0.8-3.5c-2.5-1.5-9-1.5-12.6 0z" fill="#111"/><path d="M43.8 270.5h13.6l-0.6 3c-0.5 1.3-3 1.3-4 0.2l-0.6-1.2h-3.4l-0.6 1.2c-1 1.1-3.5 1.1-4 -0.2z" fill="#0a0a0a"/><path d="M48.3 278.2h4.2" stroke="#5a2a1a" stroke-width="0.6"/><text x="62.4" y="298.3" font-size="9.9" font-weight="bold" fill="#fff" stroke="#fff" stroke-width="0.3" font-family="Liberation Sans">喝酒大哥</text><clipPath id="c4"><path d="M42.5 311.4H89.7Q95.2 311.4 96.0 316.9L106.7 343.0Q107.0 348.5 101.2 348.5H40.0Q34.5 348.5 34.5 343.0L37 316.9Q37.2 311.4 42.5 311.4Z"/></clipPath><g clip-path="url(#c4)"><path d="M42.5 311.4H89.7Q95.2 311.4 96.0 316.9L106.7 343.0Q107.0 348.5 101.2 348.5H40.0Q34.5 348.5 34.5 343.0L37 316.9Q37.2 311.4 42.5 311.4Z" fill="#c99a5c"/><path d="M34 325C40 338 52 346 66 349H34Z" fill="#dcbd88"/></g><text x="41.2" y="326.8" font-size="10.4" font-weight="bold" font-style="italic" fill="#fff" stroke="#fff" stroke-width="0.3" font-family="Liberation Sans">重启人生</text><text x="73.9" y="339.1" font-size="8.2" font-weight="bold" fill="#fff" stroke="#fff" stroke-width="0.3" font-family="Liberation Sans">模拟器</text><clipPath id="c5"><path d="M126.7 266.1H172.0Q177.5 266.1 178.3 271.6L189.3 297.0Q189.60000000000002 302.5 183.8 302.5H122.7Q117.2 302.5 117.2 297.0L121.2 271.6Q121.4 266.1 126.7 266.1Z"/></clipPath><g clip-path="url(#c5)"><path d="M126.7 266.1H172.0Q177.5 266.1 178.3 271.6L189.3 297.0Q189.60000000000002 302.5 183.8 302.5H122.7Q117.2 302.5 117.2 297.0L121.2 271.6Q121.4 266.1 126.7 266.1Z" fill="#a20d1c"/><path d="M116 284L148 303H116Z" fill="#b8404c"/></g><path d="M125 283C121 284 118 285 116.3 285.5C118 288 122 289 125.5 288.5Z" fill="#56a82c"/><path d="M124 276.5C123 281 123 285 124.3 288.3C126.5 290.3 131 290.6 135.3 289.6C137.4 287 137.8 282 136.2 277.5Z" fill="#5cb030"/><path d="M123 272C122 266 126 263.5 131 263.5C135 263.5 138 266 138.5 270L141 272.5C142.6 274 142.2 277.6 139 278.2L133 279.2C129 279.6 124 278.2 123 272Z" fill="#62b834"/><ellipse cx="131.8" cy="283" rx="3.2" ry="4.7" fill="#c8ec50"/><path d="M128.8 280.5h6M128.7 283h6.2M128.9 285.5h5.8" stroke="#8cc840" stroke-width="0.55"/><circle cx="129.7" cy="270.1" r="3.1" fill="#f2f2f2"/><path d="M126.7 270.6a3 3 0 0 0 6 0z" fill="#2e4a2e"/><circle cx="135.9" cy="270.2" r="2.5" fill="#f2f2f2"/><path d="M133.4 270.6a2.5 2.5 0 0 0 5 0z" fill="#2e4a2e"/><path d="M123.2 268l-1.2-0.8 1.5-0.5M122.8 272l-1.4 0M123.3 276l-1.2 0.8" fill="none" stroke="#3e8a22" stroke-width="0.7"/><text x="144.4" y="298.1" font-size="9.9" font-weight="bold" fill="#fff" stroke="#fff" stroke-width="0.3" font-family="Liberation Sans">咬手鳄鱼</text><linearGradient id="wd" x1="0" y1="0" x2="0" y2="1"><stop offset="0" stop-color="#a87440"/><stop offset="1" stop-color="#8a5a2e"/></linearGradient><path d="M121 355H189V359.5Q154 361.5 120 359.5Z" fill="#000" opacity=".13"/><path d="M124.9 334.5H183L187.5 354.9H120.4Z" fill="url(#wd)"/><path d="M120.4 354.9H187.5V357.5H120.4Z" fill="#6a4222"/><path d="M138 334.6L135.5 354.8M154 334.6L153.5 354.8M170 334.6L172 354.8" stroke="#7a4e26" stroke-width="0.5" opacity=".8"/><path d="M137 340v2M171 339v3" stroke="#e8d8c0" stroke-width="0.7"/><path d="M140.2 344.8H171" stroke="#2a5a8a" stroke-width="0.9"/><path d="M151 338.3l-0.3 7h3l0.8-5 0.8 5h3.2l-0.6-7z" fill="#8a2a2e"/><path d="M149.7 331.5c0-1.5 2-2 5-2s5 0.5 5 2l0.3 8h-10.6z" fill="#f06060"/><path d="M150.5 331.5c-3-3-5.5-8-6.6-13.2" stroke="#f8d8c0" stroke-width="2" fill="none" stroke-linecap="round"/><path d="M150.8 331.8c-1-1-1.8-2-2.4-3" stroke="#f06060" stroke-width="2.4" fill="none" stroke-linecap="round"/><path d="M144 319.5c-0.4-1.2 0.2-2.4 1-2.6" stroke="#f8d8c0" stroke-width="1.8" fill="none" stroke-linecap="round"/><path d="M159.5 332c2.2 1.2 2.6 4 0.6 5.6" stroke="#f8d8c0" stroke-width="1.5" fill="none"/><ellipse cx="154" cy="322" rx="8.5" ry="8.7" fill="#f8dcc8"/><path d="M145.6 325C144 316 148.5 312.8 154 312.8S164 316 162.4 325L161.2 321.5C157 322 151 322 147 321.5Z" fill="#6e5a5a"/><path d="M155 313.2l1.8-1.6 0.5 1.8" fill="#6e5a5a"/><circle cx="151" cy="325.1" r="0.8" fill="#333"/><circle cx="156.6" cy="325.1" r="0.8" fill="#333"/><ellipse cx="154.2" cy="328.4" rx="1.6" ry="1.3" fill="#e83838"/><circle cx="149" cy="327" r="1.2" fill="#f8b8b0" opacity=".7"/><circle cx="159" cy="327" r="1.2" fill="#f8b8b0" opacity=".7"/><path d="M139.1 317.1L144 310.4L147.4 312.8L142.5 319.5Z" fill="#111"/><path d="M141.5 316l3-4M143.2 317.2l3-4" stroke="#666" stroke-width="0.4"/><text x="132.6" y="357.6" font-size="10.4" font-weight="bold" fill="#3a2010" stroke="#3a2010" stroke-width="1.2" textLength="42" lengthAdjust="spacingAndGlyphs" font-family="Liberation Sans" opacity=".55">手持弹幕</text><text x="132.2" y="357" font-size="10.4" font-weight="bold" fill="#fff" stroke="#fff" stroke-width="0.25" textLength="42" lengthAdjust="spacingAndGlyphs" font-family="Liberation Sans">手持弹幕</text><rect x="85" y="433.4" width="52" height="2.2" rx="1.1" fill="#111"/></svg>
<svg class="a" style="left:0;top:0;overflow:visible" width="1" height="1"><text x="5.2" y="47" font-size="5.3" fill="#bdbdbd" textLength="63.8" lengthAdjust="spacingAndGlyphs" font-family="Liberation Sans" >iPhone 12/13 (Pro) 100% 16 ▾</text></svg>
<svg class="a" style="left:0;top:0;overflow:visible" width="1" height="1"><text x="80" y="47.3" font-size="5.5" fill="#bdbdbd" textLength="25" lengthAdjust="spacingAndGlyphs" font-family="Liberation Sans" >热重载 开 ▾</text></svg>
<div class="a" style="left:107px;top:40px;width:0.6px;height:10px;background:#404040"></div>
<svg class="a" style="left:154px;top:40px" width="70" height="10" viewBox="0 0 70 10"><circle cx="5.5" cy="5.2" r="3.2" fill="none" stroke="#aaa" stroke-width="0.7" stroke-dasharray="2.2 0.8"/><circle cx="23.4" cy="5.2" r="3.3" fill="none" stroke="#aaa" stroke-width="0.7"/><circle cx="23.4" cy="5.2" r="1.6" fill="#aaa"/><rect x="39" y="4.5" width="4.6" height="5.6" rx="0.6" fill="none" stroke="#aaa" stroke-width="0.7" transform="translate(0 -2)"/><path d="M40.5 7.2h1.6" stroke="#aaa" stroke-width="0.5"/><rect x="56" y="3.5" width="6" height="4.3" rx="1" fill="none" stroke="#aaa" stroke-width="0.7"/><path d="M57.5 3.5V2.3h6v4.2h-1.5" fill="none" stroke="#aaa" stroke-width="0.7"/></svg>
<svg class="a" style="left:223px;top:38px" width="88" height="14" viewBox="0 0 88 14"><rect x="2.5" y="4.3" width="4.5" height="6" rx="0.8" fill="none" stroke="#7fc8d8" stroke-width="0.8"/><path d="M4.5 4.3V2.5h3.3l1.5 1.5v4.8H7" fill="none" stroke="#eee" stroke-width="0.8"/><circle cx="21.3" cy="6" r="2.4" fill="none" stroke="#aaa" stroke-width="0.7"/><path d="M19.5 7.8l-2 2.2" stroke="#aaa" stroke-width="0.8"/><circle cx="33" cy="3" r="1" fill="none" stroke="#aaa" stroke-width="0.6"/><circle cx="33" cy="10" r="1" fill="none" stroke="#aaa" stroke-width="0.6"/><circle cx="37" cy="4.5" r="1" fill="none" stroke="#aaa" stroke-width="0.6"/><path d="M33 4v5M37 5.5c0 2-4 2-4 3.5" fill="none" stroke="#aaa" stroke-width="0.6"/><rect x="46.5" y="6" width="3" height="3" fill="none" stroke="#aaa" stroke-width="0.6"/><rect x="50" y="6" width="3" height="3" fill="none" stroke="#aaa" stroke-width="0.6"/><rect x="46.5" y="9.5" width="3" height="3" fill="none" stroke="#aaa" stroke-width="0.6"/><rect x="50.5" y="2.5" width="3" height="3" fill="none" stroke="#aaa" stroke-width="0.6" transform="rotate(0)"/><rect x="61" y="3" width="5" height="6.5" fill="none" stroke="#aaa" stroke-width="0.6"/><path d="M62.3 5.5h2.4M62.3 7h2.4" stroke="#aaa" stroke-width="0.5"/><path d="M73.5 8.5c0-2.5 2-4 4-4s3.5 1.5 3.5 3c0 1.5-2 2-3.5 2h-4z" fill="#9a9a9a"/><path d="M79.5 4.5l2-2" stroke="#9a9a9a" stroke-width="0.8"/></svg>
<div class="t" style="left:231.7px;top:57px;font-size:5.4px;color:#cfcfcf;">资源管理器</div>
<div class="t" style="left:296.3px;top:56.2px;font-size:5.5px;color:#d0d0d0;">···</div>
<div class="a" style="left:223px;top:67px;width:88px;height:9.8px;background:#353535"></div>
<div class="a" style="left:223px;top:76.8px;width:88px;height:9.8px;background:#333"></div>
<div class="t" style="left:226px;top:69.4px;font-size:4.5px;color:#aaa;">▸</div>
<div class="t" style="left:232px;top:69.4px;font-size:5.4px;color:#cfcfcf;">打开的编辑器</div>
<div class="t" style="left:226px;top:79.2px;font-size:4.5px;color:#aaa;">▾</div>
<div class="t" style="left:231.5px;top:79.2px;font-size:5.4px;color:#cfcfcf;">喝酒小程序</div>
<div class="a" style="left:223px;top:136px;width:88px;height:9px;background:#3c3c3c"></div>
<div class="t" style="left:231px;top:89.4px;font-size:4.5px;color:#aaa;">▸</div>
<div class="a" style="left:238.2px;top:89.10000000000001px;width:6.2px;height:4.8px;background:#8fa0ad;border-radius:0.5px"></div>
<div class="a" style="left:238.2px;top:88.4px;width:3px;height:1px;background:#8fa0ad"></div>
<div class="t" style="left:247.5px;top:89.2px;font-size:5.8px;color:#dadada;">@babel</div>
<div class="t" style="left:231px;top:99.10000000000001px;font-size:4.5px;color:#aaa;">▸</div>
<div class="a" style="left:238.2px;top:98.80000000000001px;width:6.2px;height:4.8px;background:#8fa0ad;border-radius:0.5px"></div>
<div class="a" style="left:238.2px;top:98.10000000000001px;width:3px;height:1px;background:#8fa0ad"></div>
<div class="t" style="left:247.5px;top:98.9px;font-size:5.8px;color:#dadada;">common</div>
<div class="t" style="left:231px;top:108.8px;font-size:4.5px;color:#aaa;">▸</div>
<div class="a" style="left:238.2px;top:108.5px;width:6.2px;height:4.8px;background:#e8643a;border-radius:0.5px"></div>
<div class="a" style="left:238.2px;top:107.8px;width:3px;height:1px;background:#e8643a"></div>
<div class="a" style="left:241.5px;top:110.3px;width:3.2px;height:3.2px;background:#f4f4f4;border-radius:0.5px"></div>
<div class="t" style="left:247.5px;top:108.6px;font-size:5.8px;color:#dadada;">pages</div>
<div class="t" style="left:231px;top:118.8px;font-size:4.5px;color:#aaa;">▸</div>
<div class="a" style="left:238.2px;top:118.5px;width:6.2px;height:4.8px;background:#7cb342;border-radius:0.5px"></div>
<div class="a" style="left:238.2px;top:117.8px;width:3px;height:1px;background:#7cb342"></div>
<div class="a" style="left:241.5px;top:120.3px;width:3.2px;height:3.2px;background:#f4f4f4;border-radius:0.5px"></div>
<div class="t" style="left:247.5px;top:118.6px;font-size:5.8px;color:#dadada;">utils</div>
<div class="a" style="left:238.5px;top:128.1px;width:5.5px;height:5.5px;background:#e8c02a"></div>
<div class="t" style="left:247.5px;top:128.4px;font-size:5.8px;color:#dadada;">app.js</div>
<div class="t" style="left:237.8px;top:137.2px;font-size:5.2px;color:#e0b040;font-weight:bold;letter-spacing:-0.3px">{-}</div>
<div class="t" style="left:247.5px;top:138.0px;font-size:5.8px;color:#dadada;">app.json</div>
<svg class="a" style="left:238px;top:146.6px" width="8" height="8"><path d="M0.8 0.8h5.8l-0.7 5.2-2.2 1-2.2-1z" fill="#3d8fd8"/><path d="M2 2.3h3.4l-0.2 1.3H2.5M2.6 4.3h2.5l-0.2 1.2-1.2 0.4-1-0.4" fill="none" stroke="#fff" stroke-width="0.5"/></svg>
<div class="t" style="left:247.5px;top:147.7px;font-size:5.8px;color:#dadada;">app.wxss</div>
<div class="t" style="left:237.8px;top:156.89999999999998px;font-size:5.2px;color:#e0b040;font-weight:bold;letter-spacing:-0.3px">{-}</div>
<div class="t" style="left:247.5px;top:157.7px;font-size:5.8px;color:#dadada;">project.config.json</div>
<div class="t" style="left:237.8px;top:166.6px;font-size:5.2px;color:#e0b040;font-weight:bold;letter-spacing:-0.3px">{-}</div>
<div class="t" style="left:247.5px;top:167.4px;font-size:5.8px;color:#dadada;">project.private.config.js...</div>
<div class="t" style="left:237.8px;top:176.5px;font-size:5.2px;color:#e0b040;font-weight:bold;letter-spacing:-0.3px">{-}</div>
<div class="t" style="left:247.5px;top:177.3px;font-size:5.8px;color:#dadada;">sitemap.json</div>
<div class="a" style="left:223px;top:452.6px;width:88px;height:7.2px;background:#393939"></div>
<div class="t" style="left:226px;top:455.2px;font-size:4.5px;color:#aaa;">▸</div>
<div class="t" style="left:231.5px;top:455.2px;font-size:5.4px;color:#e6e6e6;font-weight:bold">大纲</div>
<svg class="a" style="left:314px;top:40px" width="8" height="9" viewBox="0 0 8 9"><text x="0" y="7" font-size="6.5" fill="#e0b040" font-weight="bold" font-family="Liberation Sans">{-}</text></svg>
<div class="t" style="left:325.6px;top:41.5px;font-size:5.8px;color:#e8e8e8;">app.json</div>
<svg class="a" style="left:355px;top:42px" width="6" height="6"><path d="M1 1L5 5M5 1L1 5" stroke="#ddd" stroke-width="0.8"/></svg>
<div class="t" style="left:583.5px;top:41px;font-size:6px;color:#ccc;">⎘</div>
<div class="a" style="left:597px;top:41.2px;width:5.6px;height:5.4px;border:0.7px solid #ccc"></div>
<div class="a" style="left:599.6px;top:41.2px;width:0.7px;height:5.4px;background:#ccc"></div>
<div class="t" style="left:610.5px;top:41.2px;font-size:5.5px;color:#aaa;">···</div>
<svg class="a" style="left:313px;top:52px" width="52" height="10" viewBox="0 0 52 10"><path d="M2.4 2.5h6M2.4 4.5h6M2.4 6.5h6" stroke="#8a8a8a" stroke-width="0.7"/><path d="M16.3 2v6.5l2.2-1.8 2.2 1.8V2z" fill="none" stroke="#8a8a8a" stroke-width="0.7"/><path d="M34.8 4.6h-6M31 2.5L28.8 4.6 31 6.7" fill="none" stroke="#8a8a8a" stroke-width="0.7"/><path d="M41.8 4.6h6M45.5 2.5l2.2 2.1-2.2 2.1" fill="none" stroke="#5e5e5e" stroke-width="0.7"/></svg>
<svg class="a" style="left:366.6px;top:52px" width="9" height="9" viewBox="0 0 9 9"><text x="0" y="6.9" font-size="6" fill="#e0b040" font-weight="bold" font-family="Liberation Sans">{-}</text></svg>
<div class="t" style="left:376.9px;top:53.6px;font-size:5.9px;color:#a8a8a8;letter-spacing:0.1px">app.json &gt; [ ] pages</div>
<div class="a" style="left:334px;top:160.9px;width:285px;height:13.8px;background:#3a3a3a"></div>
<div class="t" style="left:300px;top:65.60000000000001px;width:23.2px;text-align:right;font-size:6.3px;color:#525252">1</div>
<div class="t" style="left:334.6px;top:65.60000000000001px;font-size:6.8px;color:#7cc6e8;font-family:Liberation Mono">{</div>
<div class="t" style="left:300px;top:79.84px;width:23.2px;text-align:right;font-size:6.3px;color:#525252">2</div>
<div class="t m" style="left:342.8px;top:80.84px;font-size:6.6px;color:#d0d0d0"><span style="color:#7cc6e8">"</span><span style="color:#cfc6b6">pages</span><span style="color:#7cc6e8">"</span><span style="color:#7cc6e8">:</span></div>
<div class="a" style="left:377px;top:75.84px;width:4.8px;height:14.4px;border:0.7px solid #6f7f6a;background:#2c3a30"></div>
<div class="t" style="left:378.2px;top:80.64px;font-size:6.6px;color:#7cc6e8;font-family:Liberation Mono">[</div>
<div class="t" style="left:300px;top:94.08000000000001px;width:23.2px;text-align:right;font-size:6.3px;color:#525252">3</div>
<div class="t m" style="left:350.4px;top:95.08000000000001px;font-size:6.6px;letter-spacing:-0.05px"><span style="color:#7cc6e8">"</span><span style="color:#da6a52">pages/other/other</span><span style="color:#7cc6e8">"</span><span style="color:#7cc6e8">,</span></div>
<div class="t" style="left:300px;top:108.32000000000001px;width:23.2px;text-align:right;font-size:6.3px;color:#525252">4</div>
<div class="t m" style="left:350.4px;top:109.32000000000001px;font-size:6.6px;letter-spacing:-0.05px"><span style="color:#7cc6e8">"</span><span style="color:#da6a52">pages/eyu/eyu</span><span style="color:#7cc6e8">"</span><span style="color:#7cc6e8">,</span></div>
<div class="t" style="left:300px;top:122.56px;width:23.2px;text-align:right;font-size:6.3px;color:#525252">5</div>
<div class="t m" style="left:350.4px;top:123.56px;font-size:6.6px;letter-spacing:-0.05px"><span style="color:#7cc6e8">"</span><span style="color:#da6a52">pages/dage/dage</span><span style="color:#7cc6e8">"</span><span style="color:#7cc6e8">,</span></div>
<div class="t" style="left:300px;top:136.8px;width:23.2px;text-align:right;font-size:6.3px;color:#525252">6</div>
<div class="t m" style="left:350.4px;top:137.8px;font-size:6.6px;letter-spacing:-0.05px"><span style="color:#7cc6e8">"</span><span style="color:#da6a52">pages/index/index</span><span style="color:#7cc6e8">"</span><span style="color:#7cc6e8">,</span></div>
<div class="t" style="left:300px;top:151.04px;width:23.2px;text-align:right;font-size:6.3px;color:#525252">7</div>
<div class="t m" style="left:350.4px;top:152.04px;font-size:6.6px;letter-spacing:-0.05px"><span style="color:#7cc6e8">"</span><span style="color:#da6a52">pages/zhijian/zhijian</span><span style="color:#7cc6e8">"</span><span style="color:#7cc6e8">,</span></div>
<div class="t" style="left:300px;top:165.28px;width:23.2px;text-align:right;font-size:6.3px;color:#d8d8d8">8</div>
<div class="t m" style="left:350.4px;top:166.28px;font-size:6.6px;letter-spacing:-0.05px"><span style="color:#7cc6e8">"</span><span style="color:#da6a52">pages/shezhi/shezhi</span><span style="color:#7cc6e8">"</span><span style="color:#7cc6e8">,</span></div>
<div class="t" style="left:300px;top:179.52px;width:23.2px;text-align:right;font-size:6.3px;color:#525252">9</div>
<div class="t m" style="left:350.4px;top:180.52px;font-size:6.6px;letter-spacing:-0.05px"><span style="color:#7cc6e8">"</span><span style="color:#da6a52">pages/gameplay/gameplay</span><span style="color:#7cc6e8">"</span><span style="color:#7cc6e8">,</span></div>
<div class="t" style="left:300px;top:193.76000000000002px;width:23.2px;text-align:right;font-size:6.3px;color:#525252">10</div>
<div class="t m" style="left:350.4px;top:194.76000000000002px;font-size:6.6px;letter-spacing:-0.05px"><span style="color:#7cc6e8">"</span><span style="color:#da6a52">pages/zhuanpan/zhuanpan</span><span style="color:#7cc6e8">"</span><span style="color:#7cc6e8">,</span></div>
<div class="t" style="left:300px;top:208.00000000000003px;width:23.2px;text-align:right;font-size:6.3px;color:#525252">11</div>
<div class="t m" style="left:350.4px;top:209.00000000000003px;font-size:6.6px;letter-spacing:-0.05px"><span style="color:#7cc6e8">"</span><span style="color:#da6a52">pages/index3/index</span><span style="color:#7cc6e8">"</span><span style="color:#7cc6e8">,</span></div>
<div class="t" style="left:300px;top:222.24000000000004px;width:23.2px;text-align:right;font-size:6.3px;color:#525252">12</div>
<div class="t m" style="left:350.4px;top:223.24000000000004px;font-size:6.6px;letter-spacing:-0.05px"><span style="color:#7cc6e8">"</span><span style="color:#da6a52">pages/web/web</span><span style="color:#7cc6e8">"</span><span style="color:#7cc6e8">,</span></div>
<div class="t" style="left:300px;top:236.48px;width:23.2px;text-align:right;font-size:6.3px;color:#525252">13</div>
<div class="t m" style="left:350.4px;top:237.48px;font-size:6.6px;letter-spacing:-0.05px"><span style="color:#7cc6e8">"</span><span style="color:#da6a52">pages/dengguang/dengguang</span><span style="color:#7cc6e8">"</span><span style="color:#7cc6e8">,</span></div>
<div class="t" style="left:300px;top:250.72px;width:23.2px;text-align:right;font-size:6.3px;color:#525252">14</div>
<div class="t m" style="left:350.4px;top:251.72px;font-size:6.6px;letter-spacing:-0.05px"><span style="color:#7cc6e8">"</span><span style="color:#da6a52">pages/danmu/danmu</span><span style="color:#7cc6e8">"</span><span style="color:#7cc6e8">,</span></div>
<div class="t" style="left:300px;top:264.96px;width:23.2px;text-align:right;font-size:6.3px;color:#525252">15</div>
<div class="t m" style="left:350.4px;top:265.96px;font-size:6.6px;letter-spacing:-0.05px"><span style="color:#7cc6e8">"</span><span style="color:#da6a52">pages/select/select</span><span style="color:#7cc6e8">"</span><span style="color:#7cc6e8">,</span></div>
<div class="t" style="left:300px;top:279.2px;width:23.2px;text-align:right;font-size:6.3px;color:#525252">16</div>
<div class="t m" style="left:350.4px;top:280.2px;font-size:6.6px;letter-spacing:-0.05px"><span style="color:#7cc6e8">"</span><span style="color:#da6a52">pages/attributes/attributes</span><span style="color:#7cc6e8">"</span><span style="color:#7cc6e8">,</span></div>
<div class="t" style="left:300px;top:293.44px;width:23.2px;text-align:right;font-size:6.3px;color:#525252">17</div>
<div class="t m" style="left:350.4px;top:294.44px;font-size:6.6px;letter-spacing:-0.05px"><span style="color:#7cc6e8">"</span><span style="color:#da6a52">pages/game/game</span><span style="color:#7cc6e8">"</span><span style="color:#7cc6e8">,</span></div>
<div class="t" style="left:300px;top:307.68px;width:23.2px;text-align:right;font-size:6.3px;color:#525252">18</div>
<div class="t m" style="left:350.4px;top:308.68px;font-size:6.6px;letter-spacing:-0.05px"><span style="color:#7cc6e8">"</span><span style="color:#da6a52">pages/summarize/summarize</span><span style="color:#7cc6e8">"</span><span style="color:#7cc6e8"></span></div>
<div class="t" style="left:300px;top:321.91999999999996px;width:23.2px;text-align:right;font-size:6.3px;color:#525252">19</div>
<div class="a" style="left:342.1px;top:318.02px;width:4px;height:12px;border:0.7px solid #6f7f6a;background:#2c3a30"></div>
<div class="t" style="left:342.8px;top:322.02px;font-size:6.6px;color:#7cc6e8;font-family:Liberation Mono">]</div>
<div class="t" style="left:346.5px;top:322.91999999999996px;font-size:6.6px;color:#7cc6e8;font-family:Liberation Mono">,</div>
<svg class="a" style="left:325px;top:62px" width="8" height="24"><path d="M1.6 2l2.2 1.9 2.2-1.9" fill="none" stroke="#aaa" stroke-width="0.7"/><path d="M1.6 16l2.2 1.9 2.2-1.9" fill="none" stroke="#aaa" stroke-width="0.7"/></svg>
<div class="a" style="left:334.2px;top:76px;width:0.6px;height:250px;background:#404040"></div>
<div class="a" style="left:342.4px;top:90px;width:0.6px;height:228px;background:#404040"></div>
<div class="a" style="left:619.4px;top:61px;width:6.6px;height:108.4px;background:#414141"></div>
<div class="a" style="left:619.4px;top:100.8px;width:6.6px;height:1.3px;background:#6a6a6a"></div>
<div class="a" style="left:619.4px;top:161px;width:6px;height:7.6px;background:#4e4e4e"></div>
<div class="a" style="left:619.4px;top:169.4px;width:0.7px;height:156.6px;background:#383838"></div>
<div class="a" style="left:311px;top:326px;width:315px;height:13.4px;background:#303030"></div>
<div class="a" style="left:311px;top:326px;width:315px;height:0.7px;background:#3a3a3a"></div>
<div class="t" style="left:319.5px;top:330.6px;font-size:5.4px;color:#a8a8a8;">构建</div>
<div class="t" style="left:339.3px;top:330.6px;font-size:5.2px;color:#e8e8e8;">调试器</div>
<div class="a" style="left:339.2px;top:338.6px;width:14.3px;height:0.8px;background:#ddd"></div>
<div class="a" style="left:356.8px;top:329.4px;width:15.2px;height:7.2px;background:#e0463c;border-radius:3.6px"></div>
<div class="t" style="left:358.6px;top:330.5px;font-size:5px;color:#fff;">14, 8</div>
<div class="t" style="left:381px;top:330.6px;font-size:5.2px;color:#a0a0a0;">问题</div>
<div class="t" style="left:399px;top:330.6px;font-size:5.2px;color:#a0a0a0;">输出</div>
<div class="t" style="left:417px;top:330.6px;font-size:5.2px;color:#a0a0a0;">终端</div>
<div class="t" style="left:436.4px;top:330.6px;font-size:5.2px;color:#a0a0a0;">代码质量</div>
<svg class="a" style="left:594px;top:329px" width="26" height="8"><path d="M2 5.3l2.2-2.2 2.2 2.2" fill="none" stroke="#ccc" stroke-width="0.8"/><path d="M19 1.8l3.6 3.6M22.6 1.8L19 5.4" stroke="#ccc" stroke-width="0.8"/></svg>
<div class="a" style="left:311px;top:339.4px;width:315px;height:11.6px;background:#2a2a2a"></div>
<div class="a" style="left:311px;top:351px;width:315px;height:0.6px;background:#3a3a3a"></div>
<svg class="a" style="left:315px;top:341.5px" width="8" height="8"><path d="M5.5 1H1v5.5h1.5" fill="none" stroke="#aaa" stroke-width="0.7"/><path d="M3.5 3.5l3.5 1.2-1.5.5-.5 1.5z" fill="#ccc"/></svg>
<div class="a" style="left:326.5px;top:341.5px;width:0.5px;height:8px;background:#484848"></div>
<div class="a" style="left:329.9px;top:339.6px;width:23.6px;height:11.2px;background:#0a0a0a"></div>
<div class="t" style="left:334.8px;top:342.5px;font-size:5.6px;color:#e8e8e8;">Wxml</div>
<div class="t" style="left:357.8px;top:342.5px;font-size:5.6px;color:#d4d4d4;">Console</div>
<div class="t" style="left:387.8px;top:342.5px;font-size:5.6px;color:#d4d4d4;">Sources</div>
<div class="t" style="left:416.9px;top:342.5px;font-size:5.6px;color:#d4d4d4;">Network</div>
<div class="t" style="left:447.5px;top:342.5px;font-size:5.6px;color:#d4d4d4;">Performance</div>
<div class="t" style="left:487.4px;top:342.5px;font-size:5.6px;color:#d4d4d4;">Memory</div>
<div class="t" style="left:516px;top:342px;font-size:6px;color:#999;">»</div>
<svg class="a" style="left:556px;top:342.5px" width="6" height="6"><circle cx="3.2" cy="2.9" r="2.3" fill="#e8404a"/><path d="M2.3 2l1.8 1.8M4.1 2L2.3 3.8" stroke="#fff" stroke-width="0.5"/></svg>
<div class="t" style="left:563.2px;top:343.2px;font-size:5.5px;color:#ddd;">14</div>
<svg class="a" style="left:571px;top:342.6px" width="6" height="6"><path d="M3 0.5L5.6 5.3H0.4z" fill="#f0c020"/></svg>
<div class="t" style="left:578px;top:343.2px;font-size:5.5px;color:#ddd;">8</div>
<div class="a" style="left:585.5px;top:342px;width:0.5px;height:8px;background:#484848"></div>
<svg class="a" style="left:590px;top:341.6px" width="8" height="8"><circle cx="3.7" cy="3.7" r="2.3" fill="none" stroke="#bbb" stroke-width="1.3" stroke-dasharray="1.2 0.6"/><circle cx="3.7" cy="3.7" r="1.9" fill="none" stroke="#bbb" stroke-width="0.6"/></svg>
<div class="t" style="left:603px;top:341.8px;font-size:6.5px;color:#bbb;">⋮</div>
<div class="a" style="left:614.5px;top:343.2px;width:6px;height:5.2px;border:0.7px solid #999"></div>
<div class="a" style="left:616.4px;top:341.8px;width:6px;height:4.8px;border:0.7px solid #999;border-left:none;border-bottom:none"></div>
<div class="a" style="left:311px;top:351.6px;width:170px;height:11.6px;background:#2a2a2a"></div>
<div class="a" style="left:311px;top:363.2px;width:170px;height:0.6px;background:#383838"></div>
<div class="a" style="left:315.8px;top:355px;width:4.6px;height:4.6px;border:0.6px solid #999;border-radius:0.8px"></div>
<div class="t" style="left:323.3px;top:355.2px;font-size:5.6px;color:#cfcfcf;">Composed</div>
<div class="a" style="left:481px;top:351.6px;width:145px;height:11.6px;background:#2a2a2a"></div>
<div class="a" style="left:481px;top:351.6px;width:0.6px;height:109px;background:#3a3a3a"></div>
<div class="a" style="left:481.8px;top:352.2px;width:21.9px;height:10.8px;background:#0a0a0a"></div>
<div class="t" style="left:484.4px;top:354.6px;font-size:5.6px;color:#e8e8e8;">Styles</div>
<div class="t" style="left:507.8px;top:354.6px;font-size:5.6px;color:#d4d4d4;">Computed</div>
<div class="t" style="left:541.2px;top:354.6px;font-size:5.6px;color:#d4d4d4;">Dataset</div>
<div class="t" style="left:568.3px;top:354.6px;font-size:5.6px;color:#d4d4d4;">Component Data</div>
<div class="a" style="left:481.6px;top:363.2px;width:144.4px;height:0.6px;background:#383838"></div>
<div class="a" style="left:481.6px;top:363.2px;width:144.4px;height:10.8px;background:#2a2a2a"></div>
<div class="a" style="left:481.8px;top:363.4px;width:111.8px;height:10.5px;background:#212121"></div>
<div class="t" style="left:484.9px;top:366.9px;font-size:5.4px;color:#8a8a8a;">Filter</div>
<div class="t m" style="left:598.4px;top:366.6px;font-size:5.2px;color:#e6e6e6;font-weight:bold">.cls</div>
<div class="t" style="left:615.8px;top:365.4px;font-size:7px;color:#777;">+</div>
<div class="t m" style="left:317.6px;top:365.8px;font-size:4.9px;color:#5da0d8">&lt;pages/other/other&gt;</div>
<div class="t" style="left:318.8px;top:373.8px;font-size:4.4px;color:#bbb;">▸</div>
<div class="t m" style="left:322.5px;top:373.6px;font-size:4.9px;color:#e0e0e0">#shadow-root</div>
<div class="t m" style="left:317.6px;top:380.8px;font-size:4.9px;color:#5da0d8">&lt;/pages/other/other&gt;</div>
<div class="a" style="left:311px;top:449.8px;width:170px;height:0.7px;background:#444"></div>
<div class="a" style="left:311px;top:450.5px;width:170px;height:9.5px;background:#262626"></div>
<svg class="a" style="left:0;top:0;overflow:visible" width="1" height="1"><text x="3.9" y="468.2" font-size="5.5" fill="#bcbcbc" textLength="25.1" lengthAdjust="spacingAndGlyphs" font-family="Liberation Sans" >页面路径 ▾</text></svg>
<div class="a" style="left:33.4px;top:462.5px;width:0.5px;height:7px;background:#555"></div>
<svg class="a" style="left:0;top:0;overflow:visible" width="1" height="1"><text x="36.9" y="468.2" font-size="5.6" fill="#bcbcbc" textLength="43.1" lengthAdjust="spacingAndGlyphs" font-family="Liberation Sans" >pages/other/other</text></svg>
<div class="a" style="left:83.6px;top:463.5px;width:4.6px;height:5px;border:0.6px solid #aaa;border-radius:0.8px"></div>
<svg class="a" style="left:180px;top:462px" width="40" height="9"><path d="M3.5 2.5h5v4.5c0 1-1 1.5-2.5 1.5s-2.5-0.5-2.5-1.5z" fill="none" stroke="#aaa" stroke-width="0.6"/><path d="M4.5 2.5c0-1.2 0.6-1.8 1.5-1.8s1.5 0.6 1.5 1.8M3.5 4.5h-1.3M8.5 4.5h1.3M3.5 6.5l-1.2 0.8M8.5 6.5l1.2 0.8" fill="none" stroke="#aaa" stroke-width="0.5"/><path d="M17.2 4.9c1.5-2.2 5.5-2.2 7 0-1.5 2.2-5.5 2.2-7 0z" fill="none" stroke="#aaa" stroke-width="0.6"/><circle cx="20.7" cy="4.9" r="0.9" fill="#aaa"/><circle cx="32.6" cy="5" r="0.45" fill="#888"/><circle cx="34.6" cy="5" r="0.45" fill="#888"/><circle cx="36.6" cy="5" r="0.45" fill="#888"/></svg>
<svg class="a" style="left:228px;top:462.6px" width="30" height="8"><circle cx="4.1" cy="3.8" r="2.7" fill="none" stroke="#aaa" stroke-width="0.6"/><path d="M2.9 2.6l2.4 2.4M5.3 2.6L2.9 5" stroke="#aaa" stroke-width="0.5"/><path d="M16.3 1l2.5 4.8h-5z" fill="none" stroke="#aaa" stroke-width="0.6"/></svg>
<div class="t" style="left:236.6px;top:463.6px;font-size:5.6px;color:#c0c0c0;">0</div>
<div class="t" style="left:248.5px;top:463.6px;font-size:5.6px;color:#c0c0c0;">0</div>
<div class="t" style="left:518.5px;top:462.6px;font-size:5.4px;color:#a8a8a8;">行 8，列 28</div>
<div class="t" style="left:553.5px;top:462.6px;font-size:5.4px;color:#a8a8a8;">空格: 2</div>
<div class="t" style="left:576px;top:462.6px;font-size:5.4px;color:#a8a8a8;">UTF-8</div>
<div class="t" style="left:597.5px;top:462.6px;font-size:5.4px;color:#a8a8a8;">LF</div>
<div class="t" style="left:608px;top:462.6px;font-size:5.4px;color:#a8a8a8;">JSON</div>
</body></html>
